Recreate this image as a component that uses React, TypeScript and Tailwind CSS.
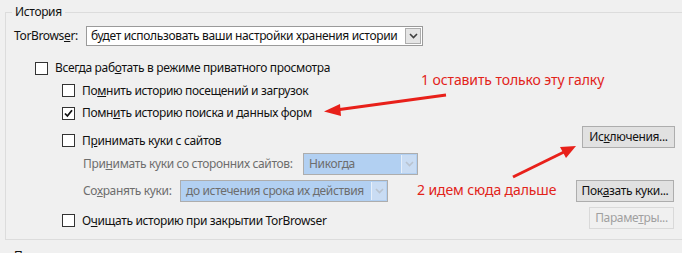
import React from "react";

const font = { fontFamily: '"Noto Sans", "Open Sans", sans-serif' };

const Chevron = ({ disabled }: { disabled?: boolean }) => (
  <svg width="9" height="6" viewBox="0 0 9 6">
    <path
      d="M1 1 L4.5 4.5 L8 1"
      fill="none"
      stroke={disabled ? "#b9c3cf" : "#404040"}
      strokeWidth="1.6"
    />
  </svg>
);

const Box = ({ checked }: { checked?: boolean }) => (
  <span className="flex h-[13px] w-[13px] shrink-0 items-center justify-center border border-[#333] bg-white">
    {checked && (
      <svg width="9" height="9" viewBox="0 0 9 9">
        <path d="M1 4.5 L3.4 7 L8 1.2" fill="none" stroke="#111" strokeWidth="1.8" />
      </svg>
    )}
  </span>
);

const Check = ({
  checked,
  children,
}: {
  checked?: boolean;
  children: React.ReactNode;
}) => (
  <div className="flex items-center gap-[7px]">
    <Box checked={checked} />
    <span className="whitespace-nowrap leading-none">{children}</span>
  </div>
);

const Btn = ({
  w,
  disabled,
  children,
}: {
  w: string;
  disabled?: boolean;
  children: React.ReactNode;
}) => (
  <div
    className={
      "flex h-[22px] items-center justify-center whitespace-nowrap border " +
      w +
      (disabled
        ? " border-[#d9d9d9] bg-[#f0f0f0] text-[#a0a0a0]"
        : " border-[#adadad] bg-[#e1e1e1] text-[#111]")
    }
  >
    {children}
  </div>
);

const DisabledSelect = ({ w, text }: { w: string; text: string }) => (
  <div
    className={
      "flex h-[22px] shrink-0 items-center border border-[#adadad] bg-[#b2d0f2] p-[1px] " + w
    }
  >
    <span className="flex-1 whitespace-nowrap pl-[4px] text-[#6d6d6d]">{text}</span>
    <span className="flex h-full w-[15px] items-center justify-center border-l border-[#e8f0fa] bg-[#c9dcf3]">
      <Chevron disabled />
    </span>
  </div>
);

export default function App() {
  return (
    <div
      className="relative h-[253px] w-[682px] overflow-hidden bg-[#f0f0f0] text-[12px] tracking-[-0.35px] text-[#111]"
      style={font}
    >
      <fieldset className="mt-[4px] ml-[5px] w-[720px] border border-[#dcdcdc] pb-[10px]">
        <legend className="ml-[6px] px-[3px] leading-[16px]">История</legend>

        <div className="w-[669px]">
          {/* TorBrowser row */}
          <div className="mt-[6px] flex h-[20px] items-center">
            <span className="w-[80px] whitespace-nowrap pl-[8px]">
              TorBrows<u>e</u>r:
            </span>
            <div className="flex h-[20px] w-[337px] items-center border border-[#9a9a9a] bg-white p-[1px]">
              <span className="flex-1 whitespace-nowrap pl-[3px]">
                будет использовать ваши настройки хранения истории
              </span>
              <span className="flex h-full w-[16px] items-center justify-center border border-[#adadad] bg-[#e5e5e5]">
                <Chevron />
              </span>
            </div>
          </div>

          <div className="mt-[11px] flex h-[22px] items-center pl-[29px]">
            <Check>
              Всегда раб<u>о</u>тать в режиме приватного просмотра
            </Check>
          </div>

          <div className="flex h-[23px] items-center pl-[56px]">
            <Check>
              По<u>м</u>нить историю посещений и загрузок
            </Check>
          </div>

          <div className="flex h-[22px] items-center pl-[56px]">
            <Check checked>
              Помн<u>и</u>ть историю поиска и данных форм
            </Check>
          </div>

          <div className="mt-[2px] flex h-[22px] items-start justify-between pl-[56px]">
            <div className="mt-[8px]">
              <Check>
                П<u>р</u>инимать куки с сайтов
              </Check>
            </div>
            <Btn w="w-[93px]">
              Ис<u>к</u>лючения...
            </Btn>
          </div>

          <div className="mt-[5px] flex h-[21px] items-center pl-[77px] text-[#6d6d6d]">
            <span className="w-[220px] whitespace-nowrap">
              При<u>н</u>имать куки со сторонних сайтов:
            </span>
            <DisabledSelect w="w-[115px]" text="Никогда" />
          </div>

          <div className="mt-[5px] flex h-[23px] items-center justify-between pl-[77px]">
            <div className="flex items-center text-[#6d6d6d]">
              <span className="w-[97px] whitespace-nowrap">
                Со<u>х</u>ранять куки:
              </span>
              <DisabledSelect w="w-[208px]" text="до истечения срока их действия" />
            </div>
            <div className="mr-[1px]">
              <Btn w="w-[98px]">
                Пок<u>а</u>зать куки...
              </Btn>
            </div>
          </div>

          <div className="mt-[5px] flex h-[22px] items-start justify-between pl-[56px]">
            <div className="mt-[7px]">
              <Check>
                О<u>ч</u>ищать историю при закрытии TorBrowser
              </Check>
            </div>
            <div className="mr-[1px]">
              <Btn w="w-[85px]" disabled>
                Параме<u>т</u>ры...
              </Btn>
            </div>
          </div>
        </div>
      </fieldset>

      <div className="mt-[8px] pl-[14px] leading-[16px]">П</div>

      {/* annotations */}
      <span className="absolute left-[421px] top-[70px] whitespace-nowrap text-[14px] leading-[20px] tracking-[-0.1px] text-[#e2231a]">
        1 оставить только эту галку
      </span>
      <span className="absolute left-[417px] top-[180px] whitespace-nowrap text-[14px] leading-[20px] tracking-[-0.1px] text-[#e2231a]">
        2 идем сюда дальше
      </span>
      <svg className="absolute left-0 top-0" width="682" height="253">
        <line x1="446" y1="95" x2="336" y2="110" stroke="#e8201a" strokeWidth="3" />
        <polygon points="324,111.5 340,104 341,116" fill="#e8201a" />
        <line x1="513" y1="177" x2="564" y2="152" stroke="#e8201a" strokeWidth="3" />
        <polygon points="576,146 560,147 566,158" fill="#e8201a" />
      </svg>
    </div>
  );
}
